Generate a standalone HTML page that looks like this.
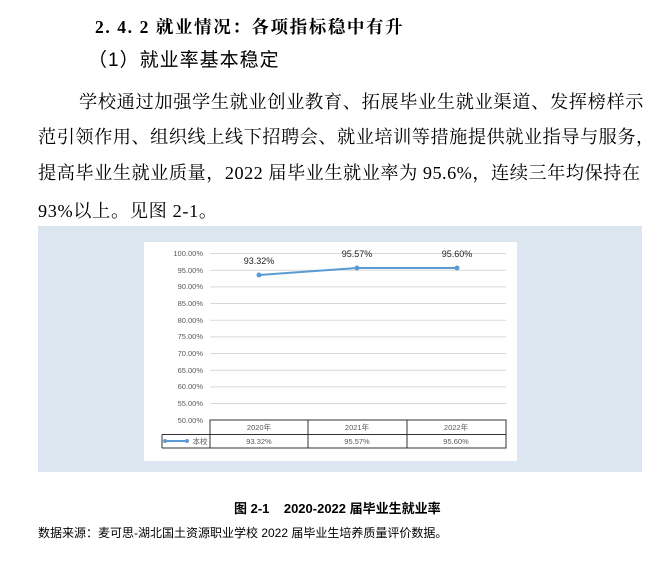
<!DOCTYPE html>
<html><head><meta charset="utf-8"><style>
body{margin:0;width:672px;height:568px;background:#fff;position:relative;overflow:hidden;font-family:"Liberation Serif","Noto Serif CJK SC",serif;color:#000}
.a{position:absolute;white-space:nowrap}
.p{font-size:18.2px;letter-spacing:0.65px}
</style></head><body>
<div class="a" style="left:95px;top:14px;font-size:17.5px;font-weight:bold;letter-spacing:1.6px;font-family:'Liberation Serif','Noto Serif CJK SC',serif">2. 4. 2 就业情况：各项指标稳中有升</div>
<div class="a" style="left:88px;top:45px;font-size:19px;font-family:'Liberation Sans','Noto Sans CJK SC',sans-serif;letter-spacing:1px">（1）就业率基本稳定</div>
<div class="a p" style="left:79px;top:88px">学校通过加强学生就业创业教育、拓展毕业生就业渠道、发挥榜样示</div>
<div class="a p" style="left:38px;top:123px;letter-spacing:0.5px">范引领作用、组织线上线下招聘会、就业培训等措施提供就业指导与服务，</div>
<div class="a p" style="left:38px;top:159px;letter-spacing:0.5px">提高毕业生就业质量，2022 届毕业生就业率为 95.6%，连续三年均保持在</div>
<div class="a p" style="left:38px;top:197px">93%以上。见图 2-1。</div>
<div class="a" style="left:38px;top:226px;width:604px;height:246px;background:#dce6f1"></div>
<svg class="a" style="left:0;top:0" width="672" height="568" font-family="Liberation Sans, Noto Sans CJK SC, sans-serif">
<rect x="144" y="242" width="373" height="219" fill="#fff"/>
<g stroke="#d9d9d9" stroke-width="1">
<line x1="210" x2="506" y1="253.5" y2="253.5"/><line x1="210" x2="506" y1="270.2" y2="270.2"/><line x1="210" x2="506" y1="286.9" y2="286.9"/><line x1="210" x2="506" y1="303.5" y2="303.5"/><line x1="210" x2="506" y1="320.2" y2="320.2"/><line x1="210" x2="506" y1="336.9" y2="336.9"/><line x1="210" x2="506" y1="353.5" y2="353.5"/><line x1="210" x2="506" y1="370.2" y2="370.2"/><line x1="210" x2="506" y1="386.9" y2="386.9"/><line x1="210" x2="506" y1="403.5" y2="403.5"/>
</g>
<g font-size="7.5" fill="#595959" text-anchor="end">
<text x="203" y="256">100.00%</text><text x="203" y="273">95.00%</text><text x="203" y="289">90.00%</text><text x="203" y="306">85.00%</text><text x="203" y="323">80.00%</text><text x="203" y="339">75.00%</text><text x="203" y="356">70.00%</text><text x="203" y="373">65.00%</text><text x="203" y="389">60.00%</text><text x="203" y="406">55.00%</text><text x="203" y="423">50.00%</text>
</g>
<g stroke="#333" stroke-width="1" fill="none">
<rect x="210" y="420" width="296" height="28"/>
<line x1="162" y1="434.5" x2="506" y2="434.5"/>
<line x1="162" y1="434.5" x2="162" y2="448"/><line x1="162" y1="448" x2="210" y2="448"/>
<line x1="308" y1="420" x2="308" y2="448"/><line x1="407" y1="420" x2="407" y2="448"/>
</g>
<g font-size="7.5" fill="#595959" text-anchor="middle">
<text x="259" y="430">2020年</text><text x="357" y="430">2021年</text><text x="456" y="430">2022年</text>
<text x="259" y="444">93.32%</text><text x="357" y="444">95.57%</text><text x="456" y="444">95.60%</text>
<text x="200" y="444">本校</text>
</g>
<line x1="165" y1="441" x2="187" y2="441" stroke="#5b9bd5" stroke-width="2"/>
<circle cx="165" cy="441" r="2" fill="#5b9bd5"/><circle cx="187" cy="441" r="2" fill="#5b9bd5"/>
<polyline points="259,275 357,268 457,268" fill="none" stroke="#5b9bd5" stroke-width="2"/>
<g fill="#5b9bd5"><circle cx="259" cy="275" r="2.5"/><circle cx="357" cy="268" r="2.5"/><circle cx="457" cy="268" r="2.5"/></g>
<g font-size="9" fill="#222" text-anchor="middle">
<text x="259" y="264">93.32%</text><text x="357" y="257">95.57%</text><text x="457" y="257">95.60%</text>
</g>
</svg>
<div class="a" style="left:234px;top:498px;font-size:13px;font-weight:bold;font-family:'Liberation Sans','Noto Sans CJK SC',sans-serif">图 2-1&nbsp;&nbsp;&nbsp; 2020-2022 届毕业生就业率</div>
<div class="a" style="left:38px;top:524px;font-size:12px;font-family:'Liberation Sans','Noto Sans CJK SC',sans-serif">数据来源：麦可思-湖北国土资源职业学校 2022 届毕业生培养质量评价数据。</div>
</body></html>
